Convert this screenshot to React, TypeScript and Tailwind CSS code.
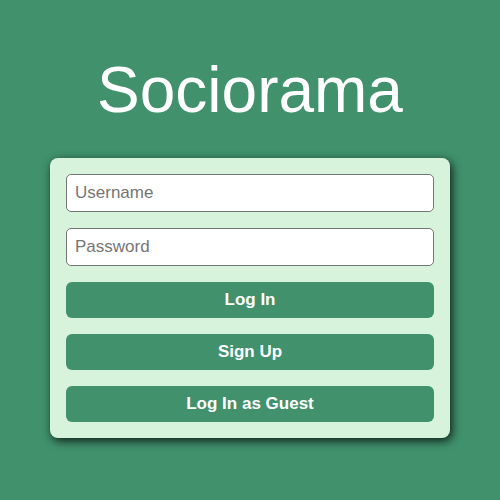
import React from "react";

export default function App() {
  return (
    <div className="w-[500px] h-[500px] bg-[#40916c] flex flex-col items-center" style={{ fontFamily: '"Liberation Sans", Arial, sans-serif' }}>
      <h1 className="mt-[58px] text-[64px] leading-[64px] text-white font-normal">Sociorama</h1>
      <div className="mt-[36px] w-[400px] bg-[#d8f3dc] rounded-[8px] p-4 flex flex-col gap-4 shadow-[2px_3px_10px_rgba(0,0,0,0.8)]">
        <input
          className="h-[38px] w-full bg-white border border-[#767676] rounded-[5px] px-2 text-[17px] text-black placeholder:text-[#757575] outline-none"
          placeholder="Username"
        />
        <input
          type="password"
          className="h-[38px] w-full bg-white border border-[#767676] rounded-[5px] px-2 text-[17px] text-black placeholder:text-[#757575] outline-none"
          placeholder="Password"
        />
        <button className="h-[36px] w-full bg-[#40916c] rounded-[6px] text-white font-bold text-[17px]">Log In</button>
        <button className="h-[36px] w-full bg-[#40916c] rounded-[6px] text-white font-bold text-[17px]">Sign Up</button>
        <button className="h-[36px] w-full bg-[#40916c] rounded-[6px] text-white font-bold text-[17px]">Log In as Guest</button>
      </div>
    </div>
  );
}
